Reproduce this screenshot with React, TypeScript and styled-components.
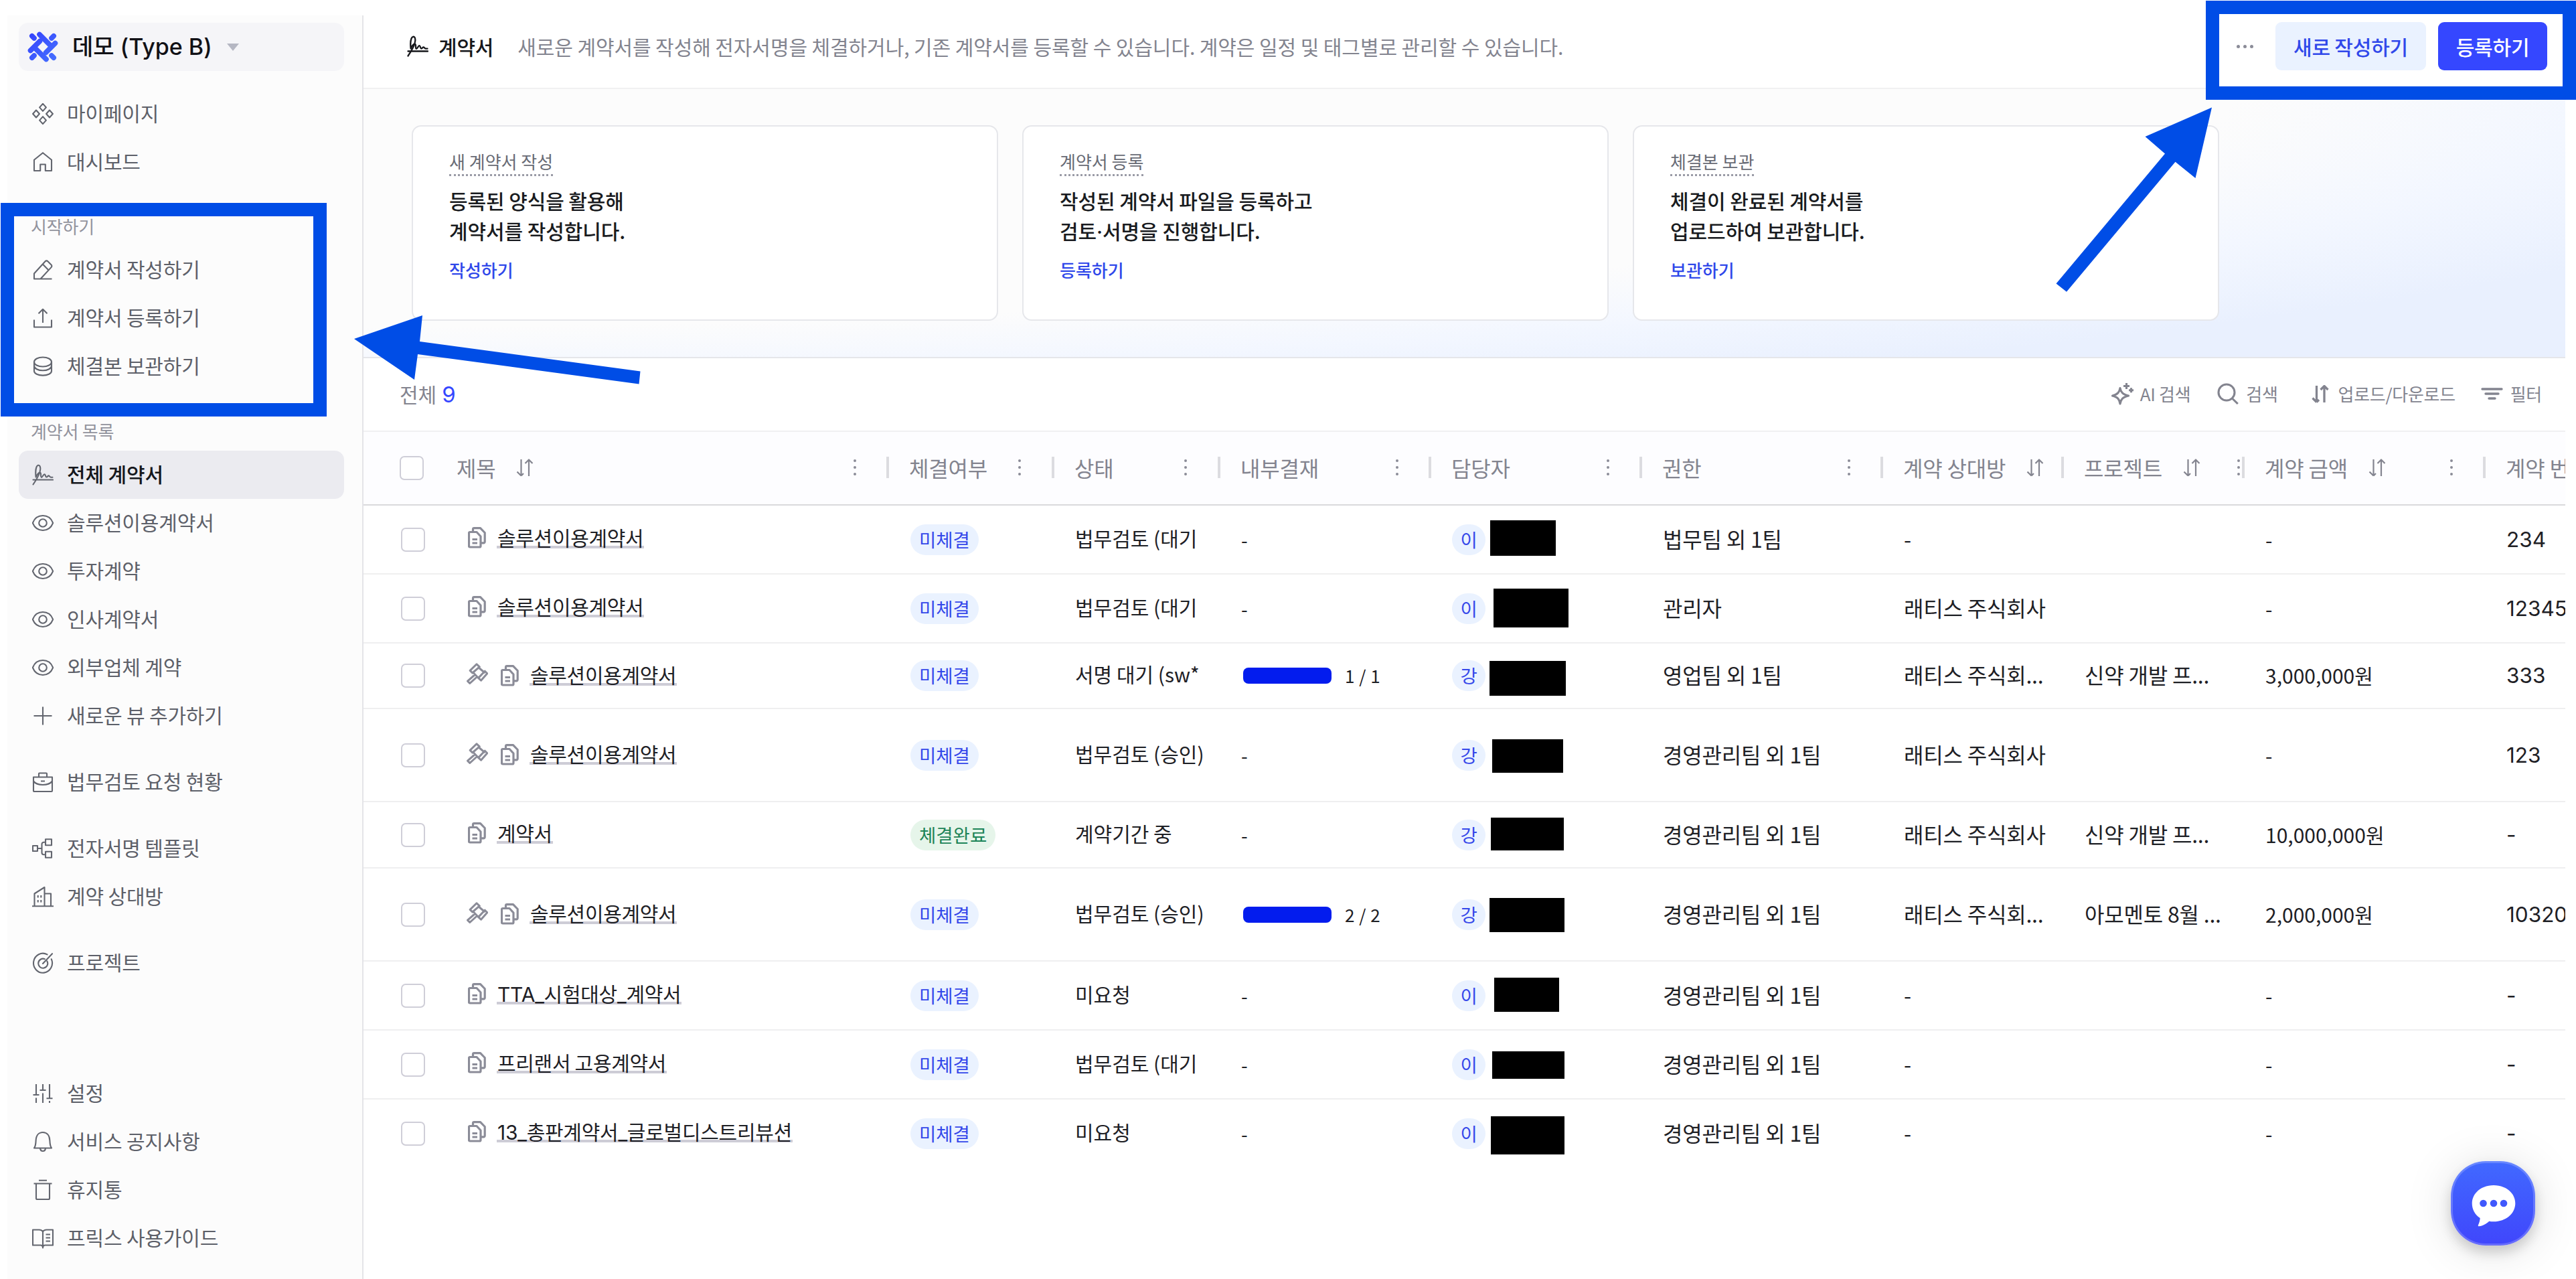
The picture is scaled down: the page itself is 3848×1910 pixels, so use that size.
import React from "react";
import styled, { createGlobalStyle, css } from "styled-components";

const GlobalStyle = createGlobalStyle`
  * { box-sizing: border-box; }
  html, body { margin: 0; padding: 0; background: #ffffff; }
  body { font-family: "Noto Sans CJK KR", "Noto Sans", sans-serif; overflow: hidden; }
`;

const latin = `"Inter", "Noto Sans CJK KR", sans-serif`;
const BLUE = "#004de6";

/* ---------- icons ---------- */

const Svg = styled.svg<{ $w?: number; $h?: number }>`
  display: block;
  flex: none;
  width: ${(p) => p.$w ?? 32}px;
  height: ${(p) => p.$h ?? 32}px;
  fill: none;
  stroke: currentColor;
  stroke-linejoin: round;
`;

const shapes: Record<string, React.ReactNode> = {
  diamonds: (
    <path d="M16 .9l4.9 5.5-4.9 5.5-4.9-5.5zM6 10.5l4.9 5.5L6 21.5 1.1 16zM26 10.5l4.9 5.5-4.9 5.5-4.9-5.5zM16 20.1l4.9 5.5-4.9 5.5-4.9-5.5z" />
  ),
  home: <path d="M3 12.8L16 2.2l13 10.6V29h-9.200V19.500h-7.600V29H3z" />,
  pencil: <path d="M29.500 29.500H3v-8L19.600 3.200a2.600 2.600 0 0 1 3.800 0l5.200 5.200a2.600 2.600 0 0 1 0 3.700L12.500 29.500M15.800 7.400l8.800 9" />,
  upload: <path d="M16 23V3M9.500 9.300L16 2.800l6.500 6.500M3 18.500V29.500h26V18.500" />,
  database: (
    <path d="M3 9.500c0-4 5.800-7 13-7s13 3 13 7-5.800 7-13 7-13-3-13-7zM3 9.500v13.500c0 3.800 5.800 6.600 13 6.600S29 26.800 29 23V9.500M3 15c0 4.300 5.800 7.300 13 7.300S29 19.300 29 15" />
  ),
  sign: (
    <path
      strokeLinecap="round"
      d="M1.500 23.500h29.500M1.500 30.500C6 24 12 15 12.300 7.500c.2-4-1.300-6.200-3.300-5.700C6 2.600 4.600 9.500 5.600 19.500c1.900-4 4.400-7.400 6.200-7 2.400.6.200 6.500 2 7.300 1.700.6 2.900-4.900 4.700-4.600 1.700.3 1.200 4.300 3 4.300 1.300 0 1.900-2.300 3.300-2.100 1.200.2 1.600 2.300 3.200 2.300h2.500"
    />
  ),
  eye: (
    <>
      <path d="M.8 16C3.500 9 9.200 5 16 5s12.500 4 15.200 11C28.500 23 22.800 27 16 27S3.500 23 .8 16z" />
      <circle cx="16" cy="16" r="5.800" />
    </>
  ),
  plus: <path d="M16 2.500v27M2.500 16h27" />,
  briefcase: (
    <path d="M2 8.500h28V29a1 1 0 0 1-1 1H3a1 1 0 0 1-1-1zM10 8V3.500a1 1 0 0 1 1-1h10a1 1 0 0 1 1 1V8M2 14.500c3 4 8 5.500 14 5.500s11-1.500 14-5.500M13 14.500h6" />
  ),
  flow: (
    <path d="M1 12h7v8H1zM20 2.200h9v9h-9zM20 20.800h9v9h-9zM8 16h6.500M20 6.700h-2.500a3 3 0 0 0-3 3v12.600a3 3 0 0 0 3 3H20" />
  ),
  building: (
    <path d="M0 30.200h32M3.500 30V11.500L18.500 2v28M18.500 11.500H28V30M8.700 14v3.500M13.300 14v3.500M8.700 21v3.500M13.300 21v3.500" />
  ),
  target: (
    <path
      strokeLinecap="round"
      d="M22.500 3.400A14 14.500 0 1 0 28.800 10.300M18.800 10.200A7 7 0 1 0 22.400 13.400M16 17L30 2.200"
    />
  ),
  sliders: <path d="M6 2v16M1.500 18h9M6 22.500V30M16 2v8M11.500 11h9M16 15.500V30M26 2v21M21.500 23.200h9M26 27v3" />,
  bell: <path d="M3 25.500h26c-2.400-3-2.400-6.500-2.600-11C26.100 6.500 22 2 16 2S5.900 6.500 5.600 14.500C5.400 19 5.400 22.500 3 25.500zM12 26c.3 2.500 2 4 4 4s3.700-1.500 4-4" />,
  trash: <path d="M2.500 6.500h27M10 1.800h12M6 6.500v22a1.500 1.500 0 0 0 1.500 1.500h17a1.500 1.500 0 0 0 1.500-1.500v-22" />,
  book: (
    <path d="M16 6c-1.300-1.700-3-2.500-5.500-2.500H1v23h11.500c2 0 3.500 1.500 3.500 4 0-2.500 1.500-4 3.500-4H31v-23h-9.500C19 3.500 17.300 4.300 16 6v24M20.500 10.500h6.500M20.500 15.500h6.500M20.500 20.500h6.500" />
  ),
};

type IconProps = { name: string; stroke?: number; size?: number };
const Icon = ({ name, stroke = 2.1, size = 32 }: IconProps) => (
  <Svg viewBox="0 0 32 32" strokeWidth={stroke} $w={size} $h={size}>
    {shapes[name]}
  </Svg>
);

const Logo = () => (
  <Svg viewBox="0 0 46 46" $w={46} $h={46}>
    <defs>
      <linearGradient id="brand" x1="0" y1="0" x2="46" y2="46" gradientUnits="userSpaceOnUse">
        <stop offset="0" stopColor="#3340fc" />
        <stop offset="1" stopColor="#4773ff" />
      </linearGradient>
    </defs>
    <g strokeLinecap="round" stroke="url(#brand)" strokeWidth={7.6}>
      <path d="M6.800 6.800l3.200 3.200M39.200 6.800l-3.200 3.200M6.800 39.200l3.200-3.200M39.200 39.200l-3.200-3.200" />
      <path d="M18 4.500L33.500 20M12.500 26L28 41.500" />
      <path d="M18.500 14.500L4.500 28.500M41.500 17.500L27.500 31.500" />
    </g>
  </Svg>
);

const SortIcon = ({ stroke = 2.2, w = 26, h = 27 }: { stroke?: number; w?: number; h?: number }) => (
  <Svg viewBox="0 0 26 27" strokeWidth={stroke} $w={w} $h={h}>
    <path d="M7.500 1v24.500M1.500 19.500l6 6M7.500 25.500l3.500-3.500M19 26V1.500M13.500 7L19 1.500 24.500 7" />
  </Svg>
);

const DocsIcon = () => (
  <Svg viewBox="0 0 27 32" strokeWidth={3.2} $w={27} $h={32}>
    <path d="M3.500 7.500H13l6 6.500V28.500a1.500 1.500 0 0 1-1.500 1.500H3a1.500 1.500 0 0 1-1.500-1.500V9a1.500 1.500 0 0 1 1.500-1.500zM7.500 7V3.500A1.800 1.800 0 0 1 9.300 1.700H18.500l6.700 6.800V22a1.800 1.800 0 0 1-1.800 1.800H20M6.500 18.500h7.500M6.500 24h7.500" />
  </Svg>
);

const GavelIcon = () => (
  <Svg viewBox="0 0 32 32" strokeWidth={3} $w={32} $h={32}>
    <path d="M15 1.800l4.300 4L8.700 15 5.200 11.400zM27.300 12.200l3.500 3.500-9.300 10.500-3.800-3.800zM17.500 6.500l10 8.500M9 13.500l9.500 10M12.500 17.500L1.500 27.200l3.300 3.300 11-10" />
  </Svg>
);

const SparkleIcon = () => (
  <Svg viewBox="0 0 34 34" strokeWidth={3.1} $w={34} $h={34}>
    <path d="M13 8.500c1 6 3.600 9 12.500 11.500C16.600 22.200 14 25.500 13 32c-1-6.500-3.200-9.800-11.500-12C9.800 17.500 12 14.500 13 8.500z" />
    <path d="M22.500 1v9M18 5.500h9M29.500 8.200v7M26 11.700h7" />
  </Svg>
);

const SearchIcon = () => (
  <Svg viewBox="0 0 32 32" strokeWidth={3.1} $w={32} $h={32}>
    <circle cx="14" cy="14" r="12" />
    <path d="M22.500 23l8.300 8" />
  </Svg>
);

const FilterIcon = () => (
  <Svg viewBox="0 0 33 18" strokeWidth={3.4} $w={33} $h={18}>
    <path strokeLinecap="round" d="M2 2h29M7 9h19M12 16h9" />
  </Svg>
);

/* ---------- frame ---------- */

const Page = styled.div`
  position: relative;
  width: 3848px;
  height: 1910px;
  overflow: hidden;
  background: #fff;
`;

const Frame = styled.div`
  display: flex;
  width: 3832px;
  height: 1910px;
  padding: 23px 0 0 11px;
`;

/* ---------- sidebar ---------- */

const Sidebar = styled.aside`
  display: flex;
  flex-direction: column;
  flex: none;
  width: 532px;
  padding: 11px 27px 0 17px;
  background: #fcfcfc;
  border-right: 2px solid #e4e4e8;
`;

const Workspace = styled.button`
  display: flex;
  align-items: center;
  height: 72px;
  padding: 0 13px;
  border: 0;
  border-radius: 14px;
  background: #f5f5f8;
  color: #111116;
`;

const WorkspaceName = styled.span`
  margin: 0 22px 0 21px;
  font: 500 34px/72px ${latin};
  letter-spacing: 0;
  white-space: nowrap;
`;

const Caret = styled.i`
  border: 9px solid transparent;
  border-top: 11px solid #b5b7c3;
  border-bottom: 0;
`;

const NavGroup = styled.nav<{ $gap: number }>`
  display: flex;
  flex-direction: column;
  margin-top: ${(p) => p.$gap}px;
`;

const NavLabel = styled.h2`
  margin: 0;
  height: 56px;
  padding-left: 18px;
  font-size: 26px;
  line-height: 54px;
  font-weight: 400;
  letter-spacing: -0.2px;
  color: #92939d;
`;

const NavItem = styled.a<{ $active?: boolean }>`
  display: flex;
  align-items: center;
  gap: 20px;
  height: 72px;
  padding: 0 20px;
  border-radius: 14px;
  font-size: 30px;
  line-height: 68px;
  letter-spacing: -0.15px;
  white-space: nowrap;
  color: #63666f;
  ${(p) =>
    p.$active &&
    css`
      background: #ebebf0;
    `}
`;

const NavText = styled.span<{ $active?: boolean }>`
  margin-bottom: 4px;
  color: ${(p) => (p.$active ? "#15171c" : "#5d6069")};
  font-weight: ${(p) => (p.$active ? 500 : 400)};
`;

/* ---------- main ---------- */

const Main = styled.main`
  display: flex;
  flex-direction: column;
  flex: 1;
  min-width: 0;
  overflow: hidden;
`;

const TopBar = styled.header`
  display: flex;
  align-items: center;
  flex: none;
  height: 110px;
  padding: 0 27px 16px 65px;
  border-bottom: 2px solid #f0f0f1;
  color: #16171b;
`;

const PageTitle = styled.h1`
  margin: 0 36px 0 15px;
  font-size: 30px;
  line-height: 72px;
  font-weight: 500;
  letter-spacing: -0.2px;
`;

const PageDesc = styled.p`
  margin: 0;
  flex: 1;
  font-size: 30px;
  line-height: 72px;
  letter-spacing: -0.08px;
  color: #83848f;
  white-space: nowrap;
`;

const Dots = styled.span<{ $vertical?: boolean; $dot: number; $gap: number }>`
  display: flex;
  flex-direction: ${(p) => (p.$vertical ? "column" : "row")};
  flex: none;
  gap: ${(p) => p.$gap}px;
  i {
    width: ${(p) => p.$dot}px;
    height: ${(p) => p.$dot}px;
    border-radius: 50%;
    background: #8b8c98;
  }
`;

const Button = styled.button<{ $primary?: boolean }>`
  flex: none;
  width: ${(p) => (p.$primary ? 163 : 225)}px;
  height: 72px;
  margin-left: ${(p) => (p.$primary ? 18 : 33)}px;
  padding: 0;
  border: 0;
  border-radius: 9px;
  background: ${(p) => (p.$primary ? "#3547ff" : "#eaf2ff")};
  color: ${(p) => (p.$primary ? "#ffffff" : "#3048ea")};
  font: 500 30px/70px "Noto Sans CJK KR", sans-serif;
  letter-spacing: -0.2px;
`;

const CardBand = styled.section`
  display: flex;
  gap: 36px;
  flex: none;
  height: 402px;
  padding: 54px 0 0 72px;
  border-bottom: 2px solid #e5e6ea;
  background: radial-gradient(2795px 355px at 0 0, #fcfcfc 100%, #f3f7ff 119%, #e9f0fe 140%);
`;

const Card = styled.article`
  display: flex;
  flex-direction: column;
  align-items: flex-start;
  width: 876px;
  height: 292px;
  padding: 32px 54px 0;
  border: 2px solid #e6e7eb;
  border-radius: 14px;
  background: #fff;
`;

const CardLabel = styled.span`
  height: 42px;
  font-size: 26px;
  line-height: 40px;
  color: #686b75;
  border-bottom: 3px dotted #9a9ba6;
`;

const CardText = styled.p`
  margin: 14px 0 0;
  font-size: 30px;
  line-height: 45px;
  font-weight: 500;
  color: #191b20;
  white-space: pre;
  letter-spacing: -0.1px;
`;

const MiddleDot = styled.span`
  font-family: ${latin};
  line-height: 1;
`;

const CardLink = styled.a`
  margin-top: 16px;
  font-size: 26px;
  line-height: 40px;
  font-weight: 500;
  color: #3048ea;
`;

const ToolBar = styled.div`
  display: flex;
  align-items: center;
  flex: none;
  height: 110px;
  padding: 0 35px 2px 54px;
  border-bottom: 2px solid #f0f0f2;
`;

const Total = styled.div`
  flex: 1;
  font-size: 30px;
  line-height: 60px;
  color: #83848f;
  b {
    margin-left: 8px;
    font: 400 33px/60px ${latin};
    color: #3547ff;
  }
`;

const Tool = styled.button<{ $gap: number; $left: number }>`
  display: flex;
  align-items: center;
  gap: ${(p) => p.$gap}px;
  margin-left: ${(p) => p.$left}px;
  padding: 0;
  border: 0;
  background: none;
  color: #83848f;
  font: 400 26px/40px "Noto Sans CJK KR", sans-serif;
  letter-spacing: -0.3px;
  white-space: nowrap;
`;

/* ---------- table ---------- */

const columns = css`
  display: grid;
  grid-template-columns: 109px 676px 247px 248px 315px 315px 360px 270px 270px 360px 320px;
  flex: none;
`;

const HeadRow = styled.div`
  ${columns}
  height: 110px;
  background: #fdfdff;
  border-bottom: 2px solid #d9d9dc;
`;

const HeadCell = styled.div`
  display: flex;
  align-items: center;
  height: 106px;
  padding-left: 30px;
  color: #83848f;
  font-size: 32px;
  line-height: 106px;
  letter-spacing: -0.2px;
  white-space: nowrap;
`;

const SortSlot = styled.span`
  margin-left: 31px;
`;

const Spacer = styled.span`
  flex: 1;
`;

const MenuSlot = styled.span<{ $gap: number }>`
  margin-right: ${(p) => p.$gap}px;
`;

const Divider = styled.i`
  flex: none;
  width: 4px;
  height: 32px;
  background: #dcdce0;
`;

const Row = styled.div<{ $h: number; $last?: boolean }>`
  ${columns}
  height: ${(p) => p.$h}px;
  border-bottom: 2px solid ${(p) => (p.$last ? "transparent" : "#efeff0")};
`;

const Check = styled.span<{ $left: number }>`
  align-self: center;
  width: 36px;
  height: 36px;
  margin-left: ${(p) => p.$left}px;
  border: 2px solid #cfced8;
  border-radius: 7px;
  background: #fff;
`;

const Cell = styled.div<{ $latin?: boolean; $size?: number; $lift?: number }>`
  display: flex;
  align-items: center;
  min-width: 0;
  padding-left: 31px;
  padding-bottom: ${(p) => p.$lift ?? 0}px;
  font-family: ${(p) => (p.$latin ? latin : "inherit")};
  font-size: ${(p) => p.$size ?? 32}px;
  line-height: 50px;
  letter-spacing: ${(p) => (p.$size ? 0 : -0.2)}px;
  color: #1e2025;
  white-space: nowrap;
`;

const TitleCell = styled.div<{ $drop: number }>`
  display: flex;
  align-items: center;
  padding-left: 46px;
  padding-top: ${(p) => p.$drop}px;
  color: #8b8c98;
`;

const GavelSlot = styled.span`
  margin: 0 18px 9px -1px;
`;

const DocsSlot = styled.span<{ $drop: number }>`
  margin: 0 16px ${(p) => 6 - p.$drop}px 1px;
`;

const TitleLink = styled.a<{ $latin?: boolean }>`
  height: 33px;
  margin-top: -7px;
  padding: 0 1px;
  border-bottom: 4px solid #cdccd6;
  font-family: ${(p) => (p.$latin ? latin : "inherit")};
  font-size: 30px;
  line-height: ${(p) => (p.$latin ? 36 : 33)}px;
  letter-spacing: ${(p) => (p.$latin ? -0.25 : -0.3)}px;
  color: #1e2025;
  white-space: nowrap;
`;

const Pill = styled.span<{ $green?: boolean; $round?: boolean }>`
  height: 46px;
  margin-left: ${(p) => (p.$round ? 0 : 1)}px;
  padding: 0 ${(p) => (p.$round ? 12.5 : 13)}px;
  border-radius: 23px;
  background: ${(p) => (p.$green ? "#e6f5ea" : "#eaf2ff")};
  color: ${(p) => (p.$green ? "#1d8458" : "#3548ea")};
  font-size: 27.5px;
  line-height: 45px;
  letter-spacing: 0;
`;

const Progress = styled.span`
  width: 132px;
  height: 24px;
  margin: 0 20px 0 3px;
  border-radius: 8px;
  background: #031cee;
`;

const Steps = styled.span`
  font-size: 26px;
  letter-spacing: 0.5px;
`;

/* ---------- floating layers ---------- */

const ChatButton = styled.button`
  position: absolute;
  left: 3661px;
  top: 1734px;
  width: 126px;
  height: 126px;
  padding: 0;
  border: 3px solid rgba(255, 255, 255, 0.2);
  border-radius: 52px;
  background: linear-gradient(180deg, #4169ff, #4046fc) border-box;
  box-shadow: 0 10px 18px rgba(0, 0, 0, 0.16), 0 6px 70px rgba(0, 0, 0, 0.13);
`;

const Highlight = styled.div<{ $x: number; $y: number; $w: number; $h: number }>`
  position: absolute;
  left: ${(p) => p.$x}px;
  top: ${(p) => p.$y}px;
  width: ${(p) => p.$w}px;
  height: ${(p) => p.$h}px;
  border: 20px solid ${BLUE};
`;

const Mask = styled.div<{ $x: number; $y: number; $w: number; $h: number }>`
  position: absolute;
  left: ${(p) => p.$x}px;
  top: ${(p) => p.$y}px;
  width: ${(p) => p.$w}px;
  height: ${(p) => p.$h}px;
  background: #000;
`;

const Arrows = styled.svg`
  position: absolute;
  left: 0;
  top: 0;
  width: 3848px;
  height: 1910px;
  fill: ${BLUE};
  pointer-events: none;
`;

/* ---------- data ---------- */

type Nav = { icon: string; text: string; active?: boolean };
const groups: { gap: number; label?: string; items: Nav[] }[] = [
  { gap: 28, items: [{ icon: "diamonds", text: "마이페이지" }, { icon: "home", text: "대시보드" }] },
  {
    gap: 33,
    label: "시작하기",
    items: [
      { icon: "pencil", text: "계약서 작성하기" },
      { icon: "upload", text: "계약서 등록하기" },
      { icon: "database", text: "체결본 보관하기" },
    ],
  },
  {
    gap: 34,
    label: "계약서 목록",
    items: [
      { icon: "sign", text: "전체 계약서", active: true },
      { icon: "eye", text: "솔루션이용계약서" },
      { icon: "eye", text: "투자계약" },
      { icon: "eye", text: "인사계약서" },
      { icon: "eye", text: "외부업체 계약" },
      { icon: "plus", text: "새로운 뷰 추가하기" },
    ],
  },
  { gap: 27, items: [{ icon: "briefcase", text: "법무검토 요청 현황" }] },
  { gap: 27, items: [{ icon: "flow", text: "전자서명 템플릿" }, { icon: "building", text: "계약 상대방" }] },
  { gap: 27, items: [{ icon: "target", text: "프로젝트" }] },
  {
    gap: 123,
    items: [
      { icon: "sliders", text: "설정" },
      { icon: "bell", text: "서비스 공지사항" },
      { icon: "trash", text: "휴지통" },
      { icon: "book", text: "프릭스 사용가이드" },
    ],
  },
];

const cards: { label: string; text: React.ReactNode; link: string }[] = [
  { label: "새 계약서 작성", text: "등록된 양식을 활용해\n계약서를 작성합니다.", link: "작성하기" },
  {
    label: "계약서 등록",
    text: (
      <>
        {"작성된 계약서 파일을 등록하고\n검토"}
        <MiddleDot>·</MiddleDot>
        {"서명을 진행합니다."}
      </>
    ),
    link: "등록하기",
  },
  { label: "체결본 보관", text: "체결이 완료된 계약서를\n업로드하여 보관합니다.", link: "보관하기" },
];

const heads: { text: string; sort?: boolean; menu?: number }[] = [
  { text: "제목", sort: true, menu: 45 },
  { text: "체결여부", menu: 46 },
  { text: "상태", menu: 46 },
  { text: "내부결재", menu: 45 },
  { text: "담당자", menu: 45 },
  { text: "권한", menu: 45 },
  { text: "계약 상대방", sort: true },
  { text: "프로젝트", sort: true, menu: 3 },
  { text: "계약 금액", sort: true, menu: 45 },
  { text: "계약 번호", sort: true, menu: 45 },
];

type Contract = {
  h: number;
  title: string;
  gavel?: boolean;
  done?: boolean;
  status: string;
  steps?: string;
  owner: string;
  team: string;
  partner: string;
  project?: string;
  amount: string;
  no: string;
};
const rows: Contract[] = [
  { h: 103, title: "솔루션이용계약서", status: "법무검토 (대기", owner: "이", team: "법무팀 외 1팀", partner: "-", amount: "-", no: "234" },
  { h: 103, title: "솔루션이용계약서", status: "법무검토 (대기", owner: "이", team: "관리자", partner: "래티스 주식회사", amount: "-", no: "12345" },
  { h: 98, title: "솔루션이용계약서", gavel: true, status: "서명 대기 (sw*", steps: "1 / 1", owner: "강", team: "영업팀 외 1팀", partner: "래티스 주식회...", project: "신약 개발 프...", amount: "3,000,000원", no: "333" },
  { h: 139, title: "솔루션이용계약서", gavel: true, status: "법무검토 (승인)", owner: "강", team: "경영관리팀 외 1팀", partner: "래티스 주식회사", amount: "-", no: "123" },
  { h: 99, title: "계약서", done: true, status: "계약기간 중", owner: "강", team: "경영관리팀 외 1팀", partner: "래티스 주식회사", project: "신약 개발 프...", amount: "10,000,000원", no: "-" },
  { h: 139, title: "솔루션이용계약서", gavel: true, status: "법무검토 (승인)", steps: "2 / 2", owner: "강", team: "경영관리팀 외 1팀", partner: "래티스 주식회...", project: "아모멘토 8월 ...", amount: "2,000,000원", no: "10320" },
  { h: 103, title: "TTA_시험대상_계약서", status: "미요청", owner: "이", team: "경영관리팀 외 1팀", partner: "-", amount: "-", no: "-" },
  { h: 103, title: "프리랜서 고용계약서", status: "법무검토 (대기", owner: "이", team: "경영관리팀 외 1팀", partner: "-", amount: "-", no: "-" },
  { h: 103, title: "13_총판계약서_글로벌디스트리뷰션", status: "미요청", owner: "이", team: "경영관리팀 외 1팀", partner: "-", amount: "-", no: "-" },
];

const masks = [
  [2226, 777, 98, 53],
  [2231, 879, 112, 58],
  [2225, 987, 114, 52],
  [2229, 1104, 106, 50],
  [2227, 1221, 109, 49],
  [2225, 1341, 112, 51],
  [2232, 1460, 97, 51],
  [2229, 1570, 108, 41],
  [2227, 1667, 110, 57],
];

/* ---------- app ---------- */

const SideNav = () => (
  <Sidebar>
    <Workspace>
      <Logo />
      <WorkspaceName>데모 (Type B)</WorkspaceName>
      <Caret />
    </Workspace>
    {groups.map((g, i) => (
      <NavGroup key={i} $gap={g.gap}>
        {g.label && <NavLabel>{g.label}</NavLabel>}
        {g.items.map((n) => (
          <NavItem key={n.text} $active={n.active}>
            <Icon name={n.icon} />
            <NavText $active={n.active}>{n.text}</NavText>
          </NavItem>
        ))}
      </NavGroup>
    ))}
  </Sidebar>
);

const ContractTable = () => (
  <>
    <HeadRow>
      <Check $left={54} />
      {heads.map((h) => (
        <HeadCell key={h.text}>
          {h.text}
          {h.sort && (
            <SortSlot>
              <SortIcon />
            </SortSlot>
          )}
          <Spacer />
          {h.menu !== undefined && (
            <MenuSlot $gap={h.menu}>
              <Dots $vertical $dot={4} $gap={6}>
                <i />
                <i />
                <i />
              </Dots>
            </MenuSlot>
          )}
          <Divider />
        </HeadCell>
      ))}
    </HeadRow>
    {rows.map((r, i) => (
      <Row key={i} $h={r.h} $last={i === rows.length - 1}>
        <Check $left={56} />
        <TitleCell $drop={r.gavel ? 3 : 0}>
          {r.gavel && (
            <GavelSlot>
              <GavelIcon />
            </GavelSlot>
          )}
          <DocsSlot $drop={r.gavel ? 2 : 0}>
            <DocsIcon />
          </DocsSlot>
          <TitleLink $latin={/^[A-Z0-9]/.test(r.title)}>{r.title}</TitleLink>
        </TitleCell>
        <Cell>
          <Pill $green={r.done}>{r.done ? "체결완료" : "미체결"}</Pill>
        </Cell>
        <Cell $size={30} $lift={6}>
          {r.status}
        </Cell>
        <Cell $size={28}>
          {r.steps ? (
            <>
              <Progress />
              <Steps>{r.steps}</Steps>
            </>
          ) : (
            "-"
          )}
        </Cell>
        <Cell>
          <Pill $round>{r.owner}</Pill>
        </Cell>
        <Cell $lift={4}>{r.team}</Cell>
        <Cell $lift={4}>{r.partner}</Cell>
        <Cell $lift={4}>{r.project}</Cell>
        <Cell $size={30} $lift={2}>
          {r.amount}
        </Cell>
        <Cell $latin $size={31.5}>
          {r.no}
        </Cell>
      </Row>
    ))}
  </>
);

export default function App() {
  return (
    <Page>
      <GlobalStyle />
      <Frame>
        <SideNav />
        <Main>
          <TopBar>
            <Icon name="sign" stroke={2.3} />
            <PageTitle>계약서</PageTitle>
            <PageDesc>
              새로운 계약서를 작성해 전자서명을 체결하거나, 기존 계약서를 등록할 수 있습니다. 계약은 일정 및 태그별로 관리할 수
              있습니다.
            </PageDesc>
            <Dots $dot={5} $gap={5}>
              <i />
              <i />
              <i />
            </Dots>
            <Button>새로 작성하기</Button>
            <Button $primary>등록하기</Button>
          </TopBar>
          <CardBand>
            {cards.map((c) => (
              <Card key={c.label}>
                <CardLabel>{c.label}</CardLabel>
                <CardText>{c.text}</CardText>
                <CardLink>{c.link}</CardLink>
              </Card>
            ))}
          </CardBand>
          <ToolBar>
            <Total>
              전체<b>9</b>
            </Total>
            <Tool $gap={9} $left={0}>
              <SparkleIcon />
              AI 검색
            </Tool>
            <Tool $gap={11} $left={40}>
              <SearchIcon />
              검색
            </Tool>
            <Tool $gap={14} $left={50}>
              <SortIcon stroke={3.3} />
              업로드/다운로드
            </Tool>
            <Tool $gap={11} $left={38}>
              <FilterIcon />
              필터
            </Tool>
          </ToolBar>
          <ContractTable />
        </Main>
      </Frame>
      {masks.map(([x, y, w, h]) => (
        <Mask key={y} $x={x} $y={y} $w={w} $h={h} />
      ))}
      <ChatButton aria-label="chat">
        <Svg viewBox="0 0 120 120" $w={120} $h={120}>
          <path
            fill="#fff"
            stroke="none"
            d="M61 33c18 0 32.300 11.500 32.300 27S79 87.300 61 87.300c-2.500 0-4.700-.2-6.800-.6C50 90.500 44.500 94 39 94.200c-1.200 0-1.500-.9-1-2 1.500-3 2.500-6.500 2.700-10.200C33 77 28.700 69 28.700 60 28.700 44.500 43 33 61 33z"
          />
          <g fill="#4058fd" stroke="none">
            <circle cx="45.500" cy="60" r="5.300" />
            <circle cx="61" cy="60" r="5.300" />
            <circle cx="76" cy="60" r="5.300" />
          </g>
        </Svg>
      </ChatButton>
      <Highlight $x={1} $y={303} $w={487} $h={319} />
      <Highlight $x={3295} $y={1} $w={553} $h={148} />
      <Arrows viewBox="0 0 3848 1910">
        <polygon points="529,506 631,471 627,510 956.500,554.500 954.500,573.500 624,529 619,567" />
        <polygon points="3304,160.500 3204.500,204 3234,229.500 3071.500,423.500 3087,435.700 3249.500,241.700 3279.500,266" />
      </Arrows>
    </Page>
  );
}
